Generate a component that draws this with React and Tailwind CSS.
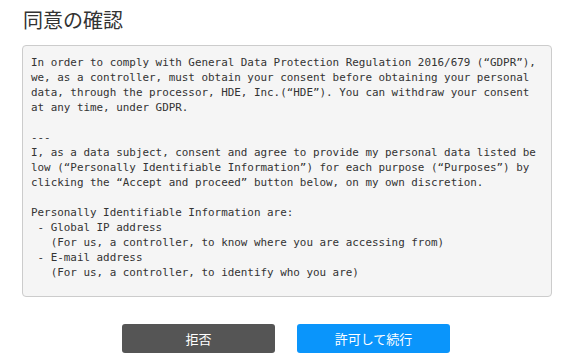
export default function App() {
  const consentText = `In order to comply with General Data Protection Regulation 2016/679 (“GDPR”),
we, as a controller, must obtain your consent before obtaining your personal
data, through the processor, HDE, Inc.(“HDE”). You can withdraw your consent
at any time, under GDPR.

---
I, as a data subject, consent and agree to provide my personal data listed be
low (“Personally Identifiable Information”) for each purpose (“Purposes”) by
clicking the “Accept and proceed” button below, on my own discretion.

Personally Identifiable Information are:
 - Global IP address
   (For us, a controller, to know where you are accessing from)
 - E-mail address
   (For us, a controller, to identify who you are)`;

  return (
    <div className="w-[572px] h-[360px] bg-white px-[22px] pt-[6px] overflow-hidden">
      <h1
        className="text-[20px] leading-[28px] text-[#333] font-normal pl-[1px]"
        style={{ fontFamily: '"Noto Sans CJK JP", "Noto Sans", sans-serif' }}
      >
        同意の確認
      </h1>
      <div className="mt-[11px] w-[530px] h-[252px] bg-[#f5f5f5] border border-[#cccccc] rounded-[4px] pl-[8px] pt-[9px]">
        <pre
          className="whitespace-pre text-[10.9px] leading-[15px] text-[#333]"
          style={{ fontFamily: '"DejaVu Sans Mono", "Liberation Mono", monospace' }}
        >
          {consentText}
        </pre>
      </div>
      <div
        className="mt-[27px] flex justify-center gap-[22px] text-[13px] text-white"
        style={{ fontFamily: '"Noto Sans CJK JP", "Noto Sans", sans-serif' }}
      >
        <button className="w-[153px] h-[29px] bg-[#555555] rounded-[3px]">拒否</button>
        <button className="w-[153px] h-[29px] bg-[#0a95fb] rounded-[3px]">許可して続行</button>
      </div>
    </div>
  );
}
